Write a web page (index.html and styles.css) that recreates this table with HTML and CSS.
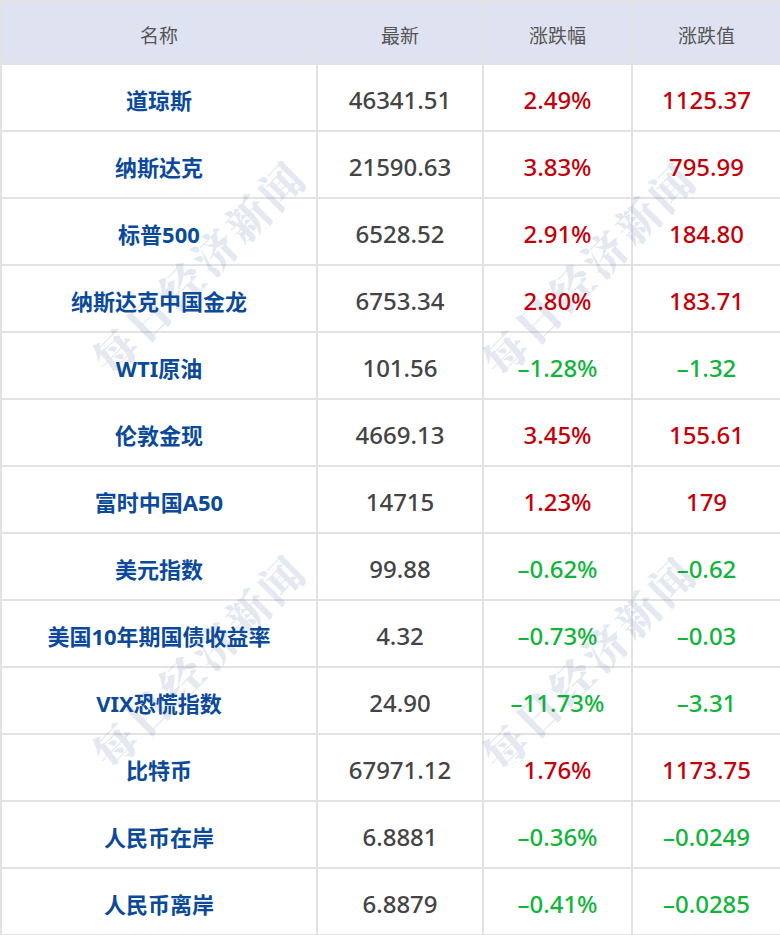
FILE: index.html
```html
<!DOCTYPE html>
<html lang="zh-CN">
<head>
<meta charset="utf-8">
<title>行情</title>
<link rel="stylesheet" href="styles.css">
</head>
<body>
<div class="wrap">
<table class="quotes">
  <colgroup>
    <col class="c-name"><col class="c-last"><col class="c-pct"><col class="c-chg">
  </colgroup>
  <thead>
    <tr><th>名称</th><th>最新</th><th>涨跌幅</th><th>涨跌值</th></tr>
  </thead>
  <tbody>
    <tr><td class="name">道琼斯</td><td class="last">46341.51</td><td class="up">2.49%</td><td class="up">1125.37</td></tr>
    <tr><td class="name">纳斯达克</td><td class="last">21590.63</td><td class="up">3.83%</td><td class="up">795.99</td></tr>
    <tr><td class="name">标普500</td><td class="last">6528.52</td><td class="up">2.91%</td><td class="up">184.80</td></tr>
    <tr><td class="name">纳斯达克中国金龙</td><td class="last">6753.34</td><td class="up">2.80%</td><td class="up">183.71</td></tr>
    <tr><td class="name">WTI原油</td><td class="last">101.56</td><td class="down">–1.28%</td><td class="down">–1.32</td></tr>
    <tr><td class="name">伦敦金现</td><td class="last">4669.13</td><td class="up">3.45%</td><td class="up">155.61</td></tr>
    <tr><td class="name">富时中国A50</td><td class="last">14715</td><td class="up">1.23%</td><td class="up">179</td></tr>
    <tr><td class="name">美元指数</td><td class="last">99.88</td><td class="down">–0.62%</td><td class="down">–0.62</td></tr>
    <tr><td class="name">美国10年期国债收益率</td><td class="last">4.32</td><td class="down">–0.73%</td><td class="down">–0.03</td></tr>
    <tr><td class="name">VIX恐慌指数</td><td class="last">24.90</td><td class="down">–11.73%</td><td class="down">–3.31</td></tr>
    <tr><td class="name">比特币</td><td class="last">67971.12</td><td class="up">1.76%</td><td class="up">1173.75</td></tr>
    <tr><td class="name">人民币在岸</td><td class="last">6.8881</td><td class="down">–0.36%</td><td class="down">–0.0249</td></tr>
    <tr><td class="name">人民币离岸</td><td class="last">6.8879</td><td class="down">–0.41%</td><td class="down">–0.0285</td></tr>
  </tbody>
</table>
<div class="wm wm-1">每日经济新闻</div>
<div class="wm wm-2">每日经济新闻</div>
<div class="wm wm-3">每日经济新闻</div>
<div class="wm wm-4">每日经济新闻</div>
</div>
</body>
</html>
```
FILE: styles.css
```css
html, body {
  margin: 0;
  padding: 0;
  background: #ffffff;
}
.wrap {
  position: relative;
  width: 780px;
  height: 935px;
  overflow: hidden;
}
.quotes {
  width: 780px;
  border-collapse: collapse;
  table-layout: fixed;
  font-family: "Noto Sans", "Noto Sans CJK SC", sans-serif;
}
.c-name { width: 316px; }
.c-last { width: 166px; }
.c-pct { width: 149px; }
.c-chg { width: 149px; }
.quotes th,
.quotes td {
  border: 2px solid #e2e2e2;
  text-align: center;
  padding: 0;
}
.quotes th {
  height: 57px;
  padding-top: 4px;
  background: #dfe2f1;
  color: #555555;
  font-size: 19px;
  font-weight: 400;
}
.quotes td {
  height: 60px;
  padding-top: 5px;
  font-size: 24px;
  font-weight: 500;
  line-height: 1;
}
.quotes td.name {
  color: #0b4a9b;
  font-weight: 700;
  font-size: 22px;
}
.quotes td.last { color: #444444; }
.quotes td.up { color: #c4000a; }
.quotes td.down { color: #10b53a; }
.wm {
  position: absolute;
  font-family: "Noto Serif CJK SC", "Noto Sans CJK SC", serif;
  font-weight: 900;
  font-size: 43px;
  letter-spacing: 4px;
  color: rgba(40, 80, 150, 0.14);
  white-space: nowrap;
  transform: translate(-50%, -50%) rotate(-45deg);
  pointer-events: none;
}
.wm-1 { left: 198px; top: 266px; }
.wm-2 { left: 588px; top: 268px; }
.wm-3 { left: 198px; top: 660px; }
.wm-4 { left: 588px; top: 662px; }
```
